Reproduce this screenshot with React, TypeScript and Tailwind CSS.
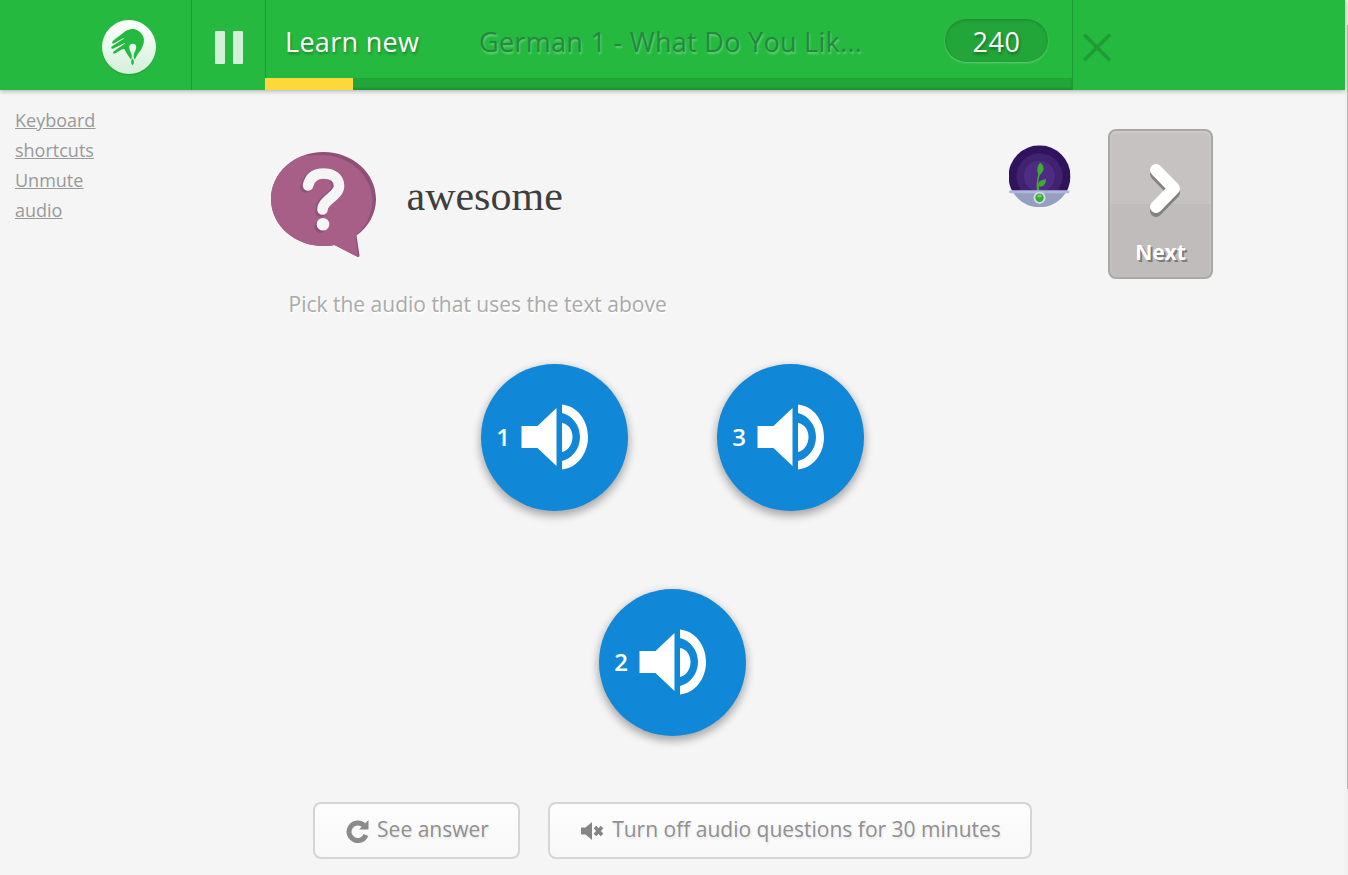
import React from "react";

function Logo() {
  return (
    <svg width="58" height="62" viewBox="-2 -2 58 62" className="block">
      <defs>
        <linearGradient id="logoFill" x1="0" y1="0" x2="0" y2="1">
          <stop offset="0" stopColor="#ffffff" />
          <stop offset="1" stopColor="#d3f0d9" />
        </linearGradient>
      </defs>
      <circle cx="27" cy="28.5" r="27" fill="#1c9632" opacity="0.5" />
      <circle cx="27" cy="27" r="27" fill="url(#logoFill)" />
      <path
        d="M23 11.5C27 8.5 32.500 8 36.500 11C41 14 42.500 18 41.800 22.500C41.200 26 39.500 29.500 37 32.500C35 35 34 37.500 32.800 39.600C31.700 38.500 31.500 36.500 31.800 34.500C32 32.500 34 30.500 34.200 27.500C34.300 25 33 23.800 30.700 23.800C28.300 23.800 27.100 25 27.300 27.500C27.500 30.500 29.300 33 29.800 35.500C30.100 37.200 29.700 38.700 28.800 39.500C27 36.500 24.300 33.500 22.300 29L19.500 29.500L13.500 33.300C11.500 34.200 10 32.800 11.800 31.200L23 23.500L22.600 23L11.500 28.600C9.300 29.500 8.500 27.500 10 26.300L22 18.600L21.600 18L11.800 23.500C10 24.300 9.500 22 11.300 20.600Z"
        fill="#25ba3f"
      />
      <path d="M30.500 38.300C31.500 40 32 41 31.900 42.500C31.700 44 31 45 30.600 45C30 45 29.200 43.800 29.100 42.500C29 41 29.700 39.800 30.500 38.300Z" fill="#25ba3f" />
    </svg>
  );
}

function QuestionBubble() {
  return (
    <svg width="105" height="105" viewBox="0 0 105 105" className="block">
      <path d="M52.500 0C81.500 0 105 21 105 47C105 61 98 74.500 85.500 83.500L88.500 103.500Q88.500 105 86.800 105L63.500 93C60 93.700 56 94 52.500 94C23.500 94 0 73 0 47C0 21 23.500 0 52.500 0Z" fill="#8e5075" />
      <path d="M50 3C77 3 101 22 101.500 50C101 63 95 75 84.500 83.500L86.800 105L63.500 93C60 93.700 56 94 52.500 94C23.500 94 0 73 0 47C0 28 13 11 31 4C37 3 44 3 50 3Z" fill="#a85f87" />
      <g fill="none" strokeLinecap="round" strokeLinejoin="round" strokeWidth="10.600">
        <path d="M34.500 35.300C38 22 49 21 52 21C61 21 66 27 66 34C66 45 49.500 46 49.500 59.500" stroke="#8e5075" />
        <path d="M37 33.500C39.500 23 47 21.500 52.500 21.500C61.500 21.500 68 26 68 34C68 44 51.500 48 51.500 57.500" stroke="#f5f5f5" />
      </g>
      <circle cx="49.500" cy="74.500" r="6.300" fill="#8e5075" />
      <circle cx="52" cy="72.300" r="6.300" fill="#f5f5f5" />
    </svg>
  );
}

function Plant() {
  return (
    <svg width="62" height="62" viewBox="0.5 -0.3 62 62" className="block">
      <defs>
        <clipPath id="plantClip"><circle cx="31" cy="31" r="31" /></clipPath>
      </defs>
      <g clipPath="url(#plantClip)">
        <rect width="62" height="46" fill="#2f145d" />
        <circle cx="31" cy="31" r="23" fill="#41226f" />
        <circle cx="31" cy="31" r="15.500" fill="#4f2c83" />
        <path d="M3 46H59L54 52L45 62H17L8 52Z" fill="#949fc1" />
      </g>
      <path d="M28.500 46C27.800 40 28.200 35 29.700 29C27.500 24 29.800 18.500 32 17.500C36 20.500 36.500 25.500 31.500 29.500C29.800 33.500 29.700 37 30 39.500C29.500 36.500 32 34.500 37.500 34C37.500 39 34.500 42.500 30.500 41L30.700 46Z" fill="#3fab36" />
      <rect x="0.500" y="45" width="60.500" height="3" rx="1.500" fill="#afb9d7" />
      <circle cx="31" cy="52.500" r="6" fill="#d5ddec" />
      <circle cx="31" cy="52.500" r="4.200" fill="#3aa935" />
      <ellipse cx="31" cy="50.600" rx="2.300" ry="1.500" fill="#7bc877" />
    </svg>
  );
}

function AudioButton({ n }: { n: number }) {
  return (
    <button className="flex size-[147px] items-center rounded-full bg-[#1187d8] pb-[2px] pl-[15px] shadow-[0_4px_8px_1px_rgba(0,0,0,0.32)]">
      <span className="w-[14px] text-[24px] leading-8 font-semibold text-white">{n}</span>
      <svg width="68" height="66" viewBox="0 0 68 66" className="ml-[11px] block" fill="#fff">
        <path d="M0.500 22H16.500L35.500 4V62L16.500 44H0.500Z" />
        <path d="M41 19C47.500 20 51.500 26 51.500 33C51.500 40 47.500 46.500 41 48Z" />
        <path d="M41 0.500C56 2 67 16 67 33C67 50 56 64 41 65.500V57C51 54.500 59 45 59 33C59 21 51 11.500 41 9Z" />
      </svg>
    </button>
  );
}

function FooterButton({ children, className }: { children: React.ReactNode; className: string }) {
  return (
    <button
      className={
        "flex h-[57px] items-center justify-center rounded-lg border-2 border-[#d5d5d5] bg-linear-to-b from-[#fdfdfd] to-[#f8f8f8] pl-[2px] text-[21px] text-[#8f8f8f] [text-shadow:1px_2px_2px_rgba(0,0,0,0.08)] " +
        className
      }
    >
      {children}
    </button>
  );
}

export default function App() {
  return (
    <div className="flex h-[875px] w-[1348px] overflow-hidden bg-[#f5f5f5] font-['Open_Sans',sans-serif]">
      <div className="flex w-[1345px] shrink-0 flex-col">
        <header className="z-10 flex h-[90px] shrink-0 bg-[#25ba3f] shadow-[0_1px_5px_rgba(0,0,0,0.3)]">
          <div className="w-[192px] border-r border-[#1f9d35] pt-[18px] pl-[100px]"><Logo /></div>
          <div className="flex w-[73px] items-center justify-center gap-[8px] pt-[5px]">
            <span className="h-[33px] w-[10px] rounded-[1px] bg-[#d3f1d9]" />
            <span className="h-[33px] w-[10px] rounded-[1px] bg-[#d3f1d9]" />
          </div>
          <div className="flex w-[808px] flex-col border-r border-[#1f9d35]">
            <div className="flex h-[78px] items-start border-l border-[#1f9d35] pt-[19px] pl-[19px]">
              <h1 className="w-[194px] text-[27px] leading-[46px] tracking-[0.300px] whitespace-nowrap text-white [text-shadow:1px_2px_3px_rgba(0,0,0,0.3)]">Learn new</h1>
              <h2 className="w-[466px] text-[27px] leading-[46px] tracking-[0.290px] whitespace-nowrap text-[#25883c] [text-shadow:1px_2px_2px_rgba(255,255,255,0.3)]">German 1 - What Do You Lik...</h2>
              <div className="h-[43px] w-[103px] rounded-full bg-[#22a539] text-center text-[27px] leading-[46px] tracking-[0.500px] text-white shadow-[inset_0_1px_3px_rgba(0,0,0,0.2),0_1px_2px_rgba(255,255,255,0.3)] [text-shadow:1px_2px_3px_rgba(0,0,0,0.35)]">240</div>
            </div>
            <div className="flex h-[12px] bg-[#22a539] shadow-[inset_0_-2px_2px_rgba(0,0,0,0.12)]">
              <div className="w-[88px] bg-[#ffd93b]" />
            </div>
          </div>
          <svg width="30" height="30" viewBox="0 0 30 30" className="mt-[32px] ml-[9px]" stroke="#209c36" strokeWidth="3.800">
            <path d="M2 2.500L28 28.500M28 2.500L2 28.500" />
          </svg>
        </header>

        <div className="flex h-[250px] shrink-0">
          <nav className="flex w-[265px] flex-col items-start pt-[15px] pl-[15px] text-[18px] leading-[30px] text-[#999] underline">
            <a className="w-[100px]">Keyboard shortcuts</a>
            <a className="w-[80px]">Unmute audio</a>
          </nav>
          <main className="w-[807px]">
            <div className="flex h-[167px] pt-[55px] pl-[6px]">
              <div className="pt-[7px]"><QuestionBubble /></div>
              <p className="ml-[30.500px] w-[602.500px] pt-[23px] font-['Liberation_Serif',serif] text-[42px] leading-[56px] text-[#3e3e3e]">awesome</p>
              <Plant />
            </div>
            <p className="mt-[31px] pl-[23.500px] text-[21px] leading-[32px] text-[#aaa] [text-shadow:1px_2px_0_#fff]">Pick the audio that uses the text above</p>
          </main>
          <button className="mt-[39px] ml-[36px] flex h-[150px] w-[105px] flex-col items-center rounded-lg border-2 border-[#a8a8a8] bg-linear-to-b from-[#c6c2c1] from-50% to-[#c0bcbb] to-50% shadow-[inset_0_1px_3px_rgba(255,255,255,0.25)]">
            <svg width="34" height="57" viewBox="0 0 34 57" className="mt-[32px] ml-[10px]" fill="none" strokeWidth="12" strokeLinecap="round" strokeLinejoin="round">
              <path d="M7 11L25 29.500L7 48" stroke="#828080" />
              <path d="M7 7L25 25.500L7 44" stroke="#fff" />
            </svg>
            <span className="mt-[18px] text-[21px] leading-[28px] font-bold text-white [text-shadow:2px_2px_0_#7d7b7b]">Next</span>
          </button>
        </div>

        <div className="flex shrink-0 flex-col items-center gap-[78px] pt-[24px]">
          <div className="flex gap-[89px]"><AudioButton n={1} /><AudioButton n={3} /></div>
          <AudioButton n={2} />
        </div>

        <footer className="mt-[66px] flex gap-[28px] pl-[313px]">
          <FooterButton className="w-[207px] gap-[7px]">
            <svg width="24" height="24" viewBox="0 0 24 24" className="mt-px">
              <path d="M18 6.500A8.800 8.800 0 1 0 20 16" fill="none" stroke="#8b8b8b" strokeWidth="5" />
              <path d="M22.500 1V10.500H13Z" fill="#8b8b8b" />
            </svg>
            <span className="pb-[2px]">See answer</span>
          </FooterButton>
          <FooterButton className="w-[484px] gap-[8px]">
            <svg width="23" height="18" viewBox="0 0 23 18" className="mt-px">
              <path d="M0 5.500H4.500L11 0V18L4.500 12.500H0Z" fill="#858585" />
              <path d="M14 5L21 13M21 5L14 13" stroke="#858585" strokeWidth="3.500" />
            </svg>
            <span className="pb-[2px]">Turn off audio questions for 30 minutes</span>
          </FooterButton>
        </footer>
      </div>
      <div className="flex w-[3px] justify-end bg-[#f1f1f1]"><div className="mt-[25px] h-[764px] w-px bg-[#b8b8b8]" /></div>
    </div>
  );
}
